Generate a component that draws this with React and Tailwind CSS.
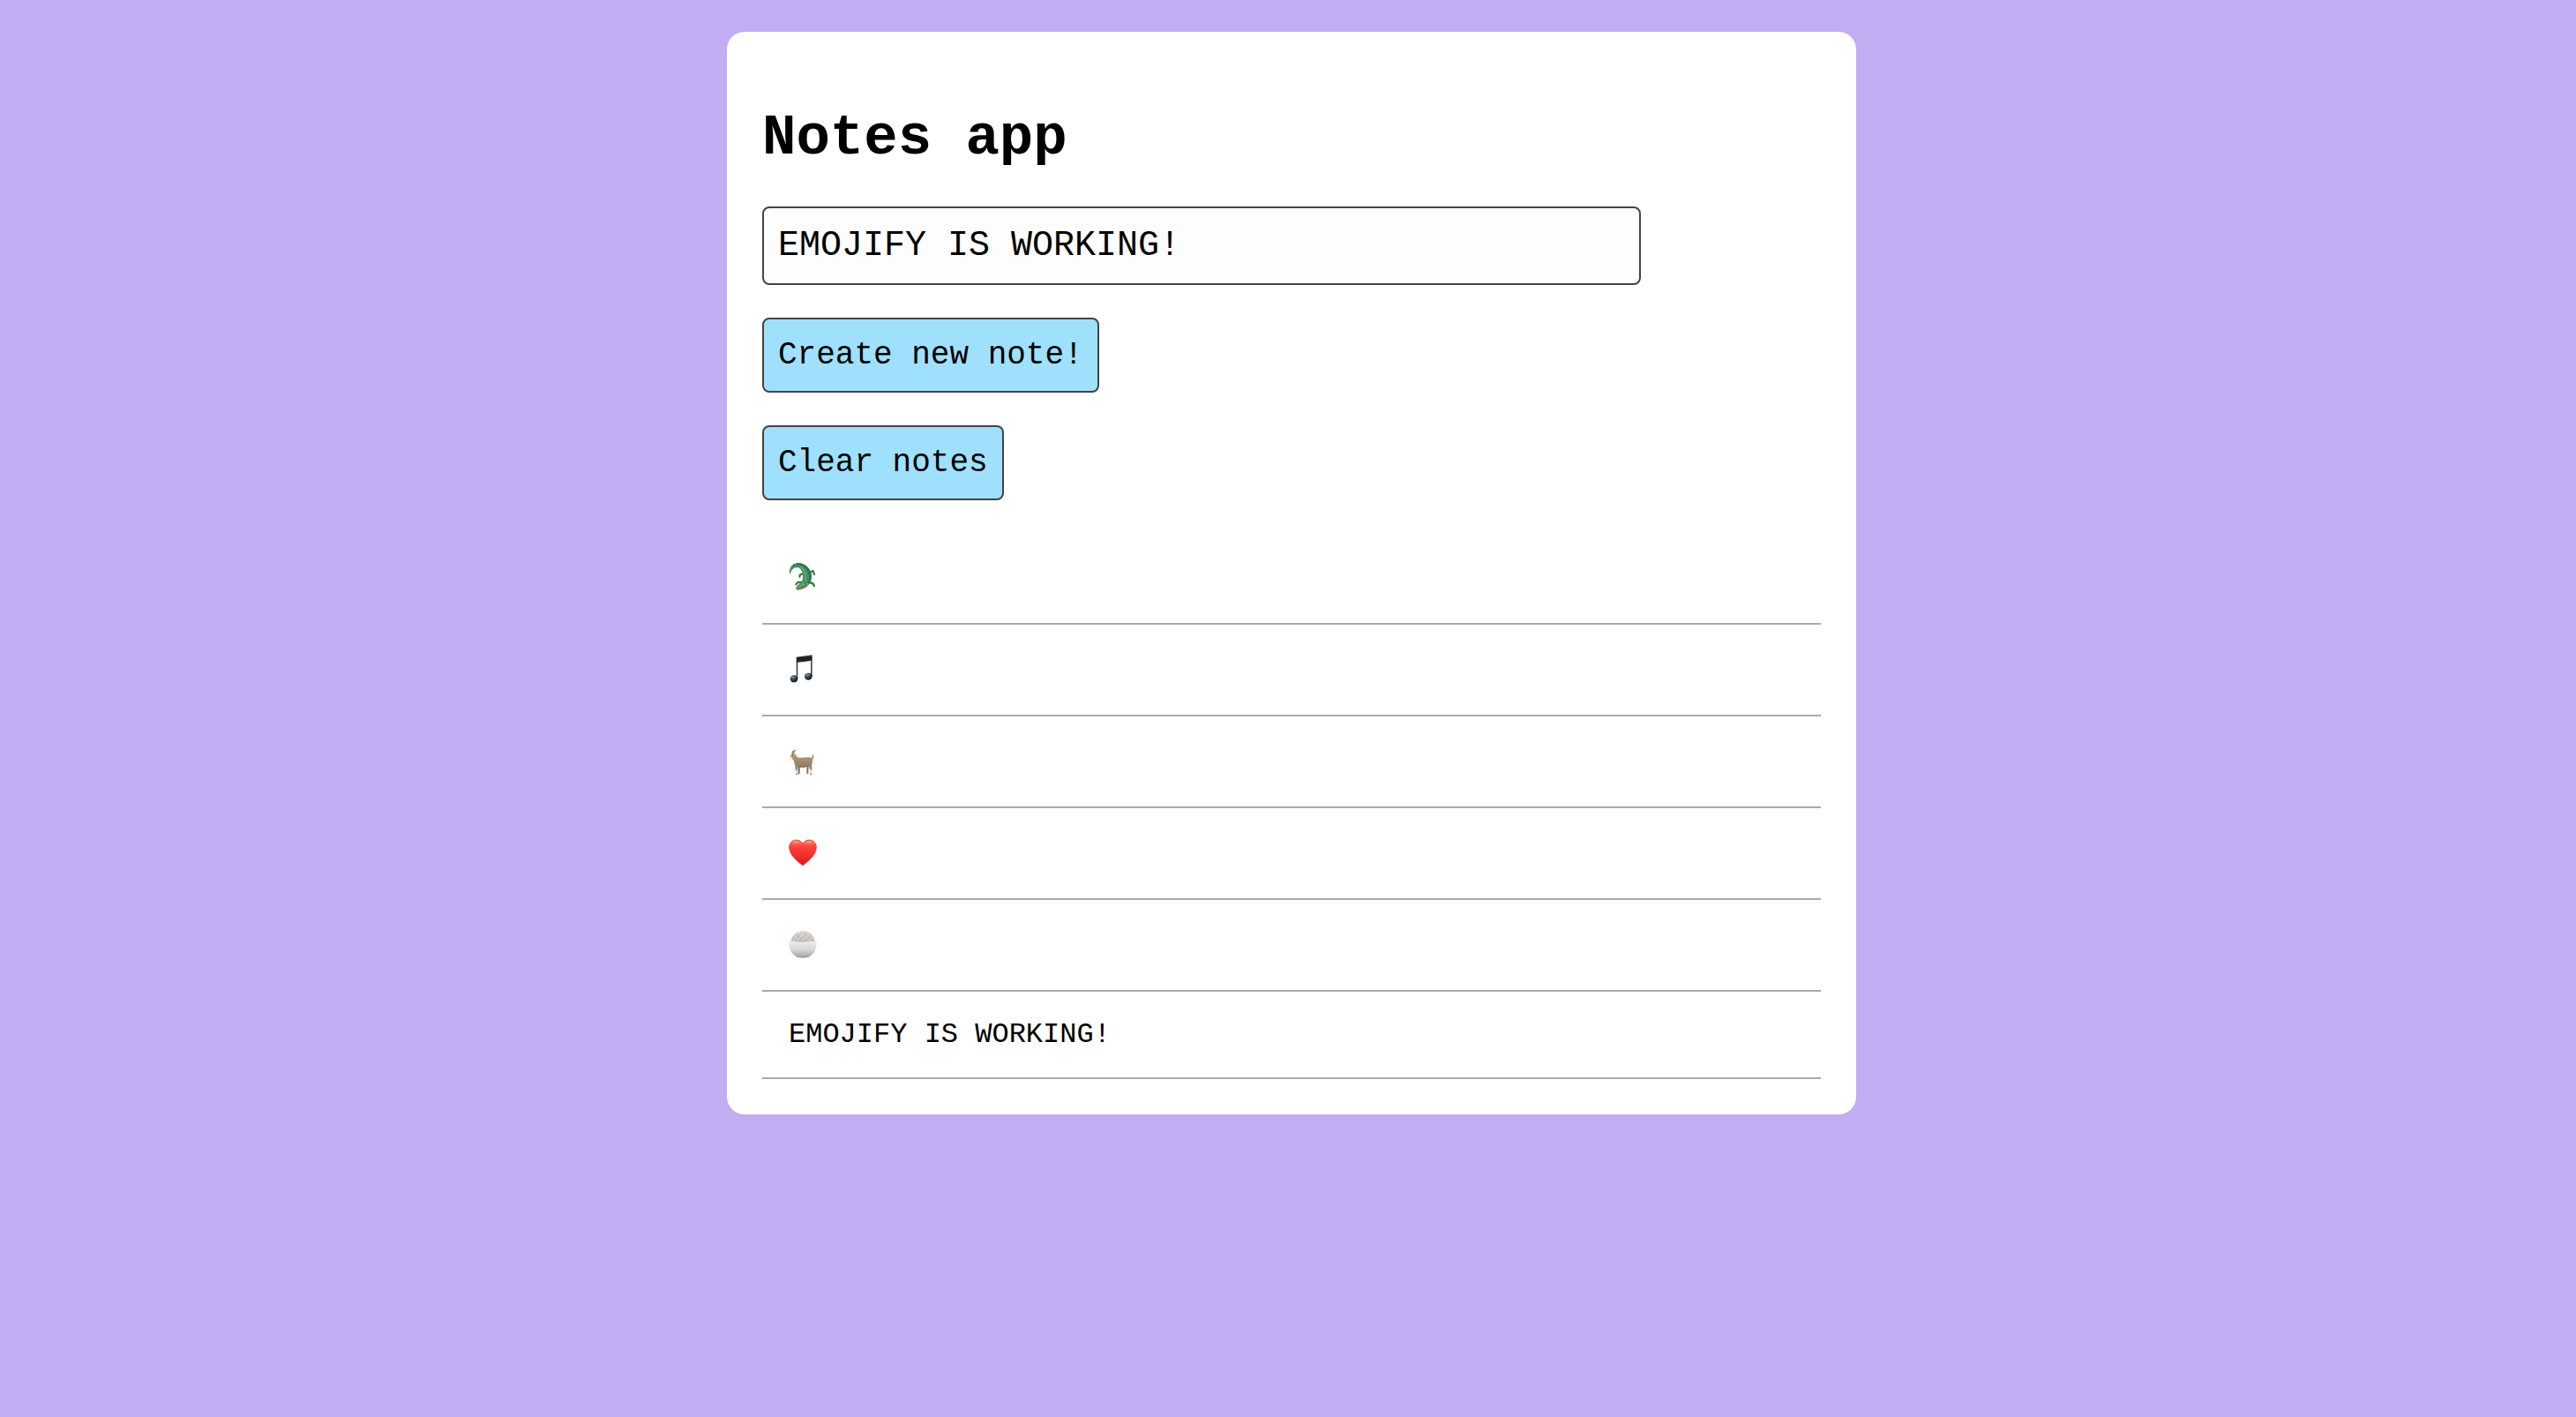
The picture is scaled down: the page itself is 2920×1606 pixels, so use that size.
import { useState } from "react";

const ICON_BOX = "0 0 96 126";

function Icon({ label, children }) {
  return (
    <svg role="img" aria-label={label} viewBox={ICON_BOX} className="block h-[42px] w-8">
      {children}
    </svg>
  );
}

function Crocodile() {
  return (
    <Icon label="Crocodile">
      <g transform="translate(-30 -12)">
        <g fill="none" stroke="#3a7d50" strokeWidth="7" strokeLinecap="round" strokeLinejoin="round">
          <path d="M80 60 L69 64 L67 71" />
          <path d="M102 57 L113 51 L117 63" />
          <path d="M76 90 L61 90 L55 97" />
          <path d="M98 90 L111 93 L117 102" />
        </g>
        <path
          d="M33 60 C30 41 43 24 62 24 C80 24 96 35 104 51 C110 64 109 80 102 92 C96 104 82 110 70 113 C62 116 55 115 55 110 C55 104 63 98 70 92 C77 86 79 79 78 69 C77 55 73 43 62 40 C51 38 40 44 37 57 C36 61 34 63 33 60Z"
          fill="#449062"
        />
        <path
          d="M66 27 C84 31 98 44 102 58 C106 72 103 84 97 92"
          fill="none"
          stroke="#30734a"
          strokeWidth="6"
          strokeLinecap="round"
        />
        <path d="M72 38 C84 48 90 62 87 84" fill="none" stroke="#68aa7c" strokeWidth="5" strokeLinecap="round" />
        <path d="M57 113 C69 114 82 110 93 101" fill="none" stroke="#a8694a" strokeWidth="4" strokeLinecap="round" />
        <path d="M63 106 C69 101 76 98 82 97" fill="none" stroke="#82bb88" strokeWidth="3" strokeLinecap="round" />
        <g stroke="#265f3c" strokeWidth="2" strokeLinecap="round">
          <path d="M47 28 L49 34 M60 25 L61 32 M75 28 L73 34 M87 34 L84 40 M97 44 L92 48 M104 57 L97 59 M107 70 L100 70 M105 82 L99 80" />
        </g>
        <circle cx="77" cy="92" r="3" fill="#cbc678" />
        <circle cx="93" cy="97" r="3" fill="#cbc678" />
        <circle cx="77" cy="92" r="1.5" fill="#172519" />
        <circle cx="93" cy="97" r="1.5" fill="#172519" />
      </g>
    </Icon>
  );
}

function MusicNotes() {
  return (
    <Icon label="Musical notes">
      <defs>
        <radialGradient id="note-head" cx="0.35" cy="0.3" r="0.75">
          <stop offset="0" stopColor="#8494a2" />
          <stop offset="0.35" stopColor="#3c4956" />
          <stop offset="1" stopColor="#10151c" />
        </radialGradient>
        <linearGradient id="note-beam" x1="0" y1="0" x2="0" y2="1">
          <stop offset="0" stopColor="#3c4855" />
          <stop offset="0.4" stopColor="#211f22" />
          <stop offset="1" stopColor="#292326" />
        </linearGradient>
      </defs>
      <g transform="translate(-30 -12)">
        <path d="M56 32 L110 25 L110 44 L56 51Z" fill="url(#note-beam)" />
        <path d="M56 48 L61 48 L61 106 L56 106Z M105 41 L110 41 L110 98 L105 98Z" fill="#3e4a56" />
        <ellipse cx="48" cy="106" rx="13" ry="12" fill="url(#note-head)" />
        <ellipse cx="97" cy="98" rx="13" ry="12" fill="url(#note-head)" />
        <path d="M39 103 Q45 98 52 100 M88 95 Q94 90 101 92" fill="none" stroke="#8294a3" strokeWidth="2" strokeLinecap="round" />
      </g>
    </Icon>
  );
}

function Goat() {
  return (
    <Icon label="Goat">
      <defs>
        <linearGradient id="goat-coat" x1="0" y1="0" x2="0" y2="1">
          <stop offset="0" stopColor="#b59d7a" />
          <stop offset="1" stopColor="#937c60" />
        </linearGradient>
      </defs>
      <g transform="translate(-30 -12)">
        <path d="M65 88 L65 113 M95 88 L94 113" stroke="#7b6a57" strokeWidth="6" />
        <path d="M56 86 L57 106 M103 80 L106 104" stroke="#9a8467" strokeWidth="8" />
        <path d="M57 102 L58 117 M106 101 L106 117" stroke="#ded1bd" strokeWidth="5" />
        <path d="M55 118 L61 118 M103 118 L109 118 M62 115 L68 115 M91 115 L97 115" stroke="#5a4d43" strokeWidth="3" />
        <path
          d="M35 56 L42 48 Q48 44 53 50 Q56 60 66 62 L100 61 Q110 62 111 73 Q111 85 106 91 Q101 96 95 92 Q80 97 66 94 Q53 94 50 83 L46 69 L38 66 Q33 63 35 56Z"
          fill="url(#goat-coat)"
        />
        <path d="M106 67 Q116 65 112 54" fill="none" stroke="#a08869" strokeWidth="5" strokeLinecap="round" />
        <path d="M47 49 Q46 41 52 37 M43 49 Q41 42 45 40" fill="none" stroke="#85817a" strokeWidth="4" strokeLinecap="round" />
        <path d="M49 51 L56 53" stroke="#d3c0a1" strokeWidth="4" strokeLinecap="round" />
        <path d="M36 59 L40 65 L41 71" fill="none" stroke="#eee6d8" strokeWidth="5" strokeLinecap="round" />
        <circle cx="43" cy="55" r="1.5" fill="#292521" />
        <path d="M62 92 Q78 97 94 91" fill="none" stroke="#7a6750" strokeWidth="3" />
      </g>
    </Icon>
  );
}

function Heart() {
  return (
    <Icon label="Red heart">
      <defs>
        <linearGradient id="heart-fill" x1="0" y1="0" x2="0" y2="1">
          <stop offset="0" stopColor="#ff725f" />
          <stop offset="0.3" stopColor="#fc4039" />
          <stop offset="0.7" stopColor="#ef2925" />
          <stop offset="1" stopColor="#d91612" />
        </linearGradient>
        <linearGradient id="heart-shine" x1="0" y1="0" x2="0" y2="1">
          <stop offset="0" stopColor="#ffb6a5" stopOpacity="0.9" />
          <stop offset="1" stopColor="#ff5448" stopOpacity="0" />
        </linearGradient>
      </defs>
      <g transform="translate(-30 -18)">
        <path
          d="M78 123 C65 112 32 90 32 61 C32 46 43 36 56 36 C67 36 75 42 78 50 C81 42 89 36 100 36 C113 36 124 46 124 61 C124 90 91 112 78 123Z"
          fill="url(#heart-fill)"
          stroke="#d9241e"
          strokeWidth="2"
        />
        <path d="M39 57 C40 44 49 39 57 39 C66 40 71 45 74 53 C63 48 49 48 39 57Z" fill="url(#heart-shine)" />
        <path d="M117 57 C116 44 107 39 99 39 C90 40 85 45 82 53 C93 48 107 48 117 57Z" fill="url(#heart-shine)" />
      </g>
    </Icon>
  );
}

function Rice() {
  return (
    <Icon label="Cooked rice">
      <defs>
        <linearGradient id="rice-bowl" x1="0" y1="0" x2="0" y2="1">
          <stop offset="0" stopColor="#ededed" />
          <stop offset="0.5" stopColor="#dadada" />
          <stop offset="1" stopColor="#a4a4a4" />
        </linearGradient>
        <linearGradient id="rice-heap" x1="0" y1="0" x2="0" y2="1">
          <stop offset="0" stopColor="#d6d2cd" />
          <stop offset="1" stopColor="#c0bab4" />
        </linearGradient>
      </defs>
      <g transform="translate(-30 -18)">
        <path d="M36 74 C37 61 42 53 49 46 C57 37 68 34 79 34 C91 34 101 38 108 46 C115 53 119 62 120 74Z" fill="url(#rice-heap)" />
        <g strokeWidth="3" strokeLinecap="round">
          <path d="M50 58 L55 53 M63 42 L68 40 M77 39 L82 41 M93 43 L98 46 M105 55 L110 59 M71 52 L77 49 M87 53 L92 56 M60 63 L65 60 M78 64 L83 61 M98 65 L103 67 M45 67 L49 64" stroke="#e9e6e2" />
          <path d="M59 50 L63 53 M83 46 L87 44 M98 55 L101 52 M68 60 L72 64 M88 65 L92 62 M51 67 L54 69 M111 67 L113 70" stroke="#b2aca6" strokeWidth="2" />
        </g>
        <path d="M31 67 Q78 77 125 67 C126 94 117 112 101 120 Q78 127 55 120 C39 112 30 94 31 67Z" fill="url(#rice-bowl)" />
        <path d="M31 68 Q78 78 125 68" fill="none" stroke="#f1f1f1" strokeWidth="2" />
        <path d="M57 121 Q78 126 99 121" fill="none" stroke="#959595" strokeWidth="3" />
      </g>
    </Icon>
  );
}

const INITIAL_NOTES = [
  <Crocodile key="crocodile" />,
  <MusicNotes key="music" />,
  <Goat key="goat" />,
  <Heart key="heart" />,
  <Rice key="rice" />,
  "EMOJIFY IS WORKING!",
];

const BUTTON =
  "cursor-pointer rounded-lg border-2 border-[#444444] bg-[#9fe0fd] px-4 py-5 text-4xl leading-[41px]";

export default function App() {
  const [text, setText] = useState("EMOJIFY IS WORKING!");
  const [notes, setNotes] = useState(INITIAL_NOTES);

  return (
    <main className="min-h-screen bg-[#c2adf3] pt-9 pl-2 font-['Courier_New','Liberation_Mono',monospace] text-black">
      <div className="mx-auto flex max-w-[1280px] flex-col items-start gap-[37px] rounded-[20px] bg-white p-10">
        <div className="w-full">
          <h1 className="mt-[45px] mb-[41px] text-[64px] leading-[72px] font-bold">Notes app</h1>
          <input
            type="text"
            aria-label="Note"
            value={text}
            onChange={(e) => setText(e.target.value)}
            className="block w-[83%] rounded-lg border-2 border-[#444444] bg-[#fdfdfd] px-4 py-5 text-[40px] leading-[45px]"
          />
        </div>
        <button type="button" className={BUTTON} onClick={() => setNotes([...notes, text])}>
          Create new note!
        </button>
        <button type="button" className={BUTTON} onClick={() => setNotes([])}>
          Clear notes
        </button>
        <ul className="w-full text-[32px] leading-[37px]">
          {notes.map((note, i) => (
            <li key={i} className="border-b-2 border-[#aaaaaa] p-[30px]">
              {note}
            </li>
          ))}
        </ul>
      </div>
    </main>
  );
}
